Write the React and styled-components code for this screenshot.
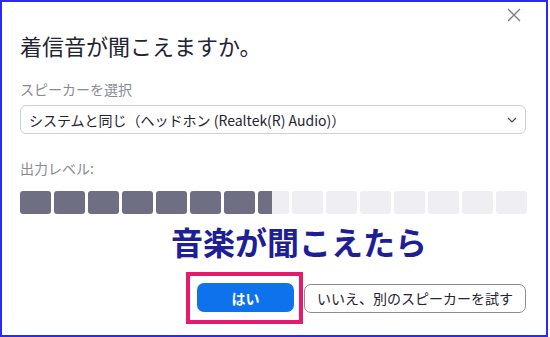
import React from 'react'
import styled, { createGlobalStyle } from 'styled-components'

const GlobalStyle = createGlobalStyle`
  html, body {
    margin: 0;
    padding: 0;
    background: #ffffff;
  }
  body {
    font-family: "Noto Sans CJK JP", "Noto Sans", sans-serif;
  }
`

const Frame = styled.div`
  box-sizing: border-box;
  width: 548px;
  height: 337px;
  border: 2px solid #2b2bf0;
  background: #ffffff;
  position: relative;
  padding: 30px 20px 0 18px;
  display: flex;
  flex-direction: column;
`

const Close = styled.button`
  position: absolute;
  top: 5px;
  right: 24px;
  width: 16px;
  height: 16px;
  padding: 0;
  border: 0;
  background: none;
  display: flex;
  align-items: center;
  justify-content: center;
`

const Title = styled.h1`
  margin: 0;
  font-size: 22px;
  line-height: 26px;
  font-weight: 400;
  color: #232333;
`

const Label = styled.div`
  margin-top: ${p => p.$top}px;
  font-size: 14px;
  line-height: 18px;
  color: #8a8a94;
`

const Select = styled.div`
  box-sizing: border-box;
  margin-top: 7px;
  height: 29px;
  border: 1px solid #cfcfd6;
  border-radius: 6px;
  padding: 0 8px 0 8px;
  display: flex;
  align-items: center;
  justify-content: space-between;
  font-size: 14px;
  color: #232333;
`

const Meter = styled.div`
  margin-top: 14px;
  display: grid;
  grid-template-columns: repeat(15, 31px);
  column-gap: 3px;
`

const Cell = styled.div`
  height: 23px;
  border-radius: 3px;
  background: #eeeef3;
  overflow: hidden;
`

const Fill = styled.div`
  height: 100%;
  background: #6e6f82;
`

const Caption = styled.div`
  margin-top: 8px;
  text-align: center;
  padding-left: 52px;
  font-size: 32px;
  line-height: 38px;
  font-weight: 700;
  color: #1e1e96;
`

const Footer = styled.div`
  margin-top: 12px;
  display: flex;
  justify-content: flex-end;
  align-items: center;
  gap: 1px;
`

const Highlight = styled.div`
  box-sizing: border-box;
  border: 4px solid #e8186c;
  padding: 7px 5px 8px 7px;
`

const Button = styled.button`
  box-sizing: border-box;
  height: 29px;
  border-radius: 7px;
  font-family: inherit;
  font-size: 14px;
  font-weight: ${p => (p.$primary ? 700 : 400)};
  cursor: pointer;
  padding: 0 12px;
  color: ${p => (p.$primary ? '#ffffff' : '#232333')};
  background: ${p => (p.$primary ? '#0e72ed' : '#ffffff')};
  border: ${p => (p.$primary ? '0' : '1.5px solid #8c8c94')};
  width: ${p => (p.$primary ? '97px' : '222px')};
  display: flex;
  align-items: center;
  justify-content: center;
`

const levels = [1, 1, 1, 1, 1, 1, 1, 0.45, 0, 0, 0, 0, 0, 0, 0]

export default function App() {
  return (
    <>
      <GlobalStyle />
      <Frame>
        <Close aria-label="閉じる">
          <svg width="14" height="14" viewBox="0 0 14 14">
            <path d="M1 1 L13 13 M13 1 L1 13" stroke="#7a7a80" strokeWidth="1.3" fill="none" />
          </svg>
        </Close>
        <Title>着信音が聞こえますか。</Title>
        <Label $top={22}>スピーカーを選択</Label>
        <Select>
          <span>システムと同じ（ヘッドホン (Realtek(R) Audio)）</span>
          <svg width="10" height="6" viewBox="0 0 10 6">
            <path d="M1 1 L5 5 L9 1" stroke="#444" strokeWidth="1.2" fill="none" />
          </svg>
        </Select>
        <Label $top={25}>出力レベル:</Label>
        <Meter>
          {levels.map((l, i) => (
            <Cell key={i}>
              <Fill style={{ width: `${l * 100}%` }} />
            </Cell>
          ))}
        </Meter>
        <Caption>音楽が聞こえたら</Caption>
        <Footer>
          <Highlight>
            <Button $primary>はい</Button>
          </Highlight>
          <Button>いいえ、別のスピーカーを試す</Button>
        </Footer>
      </Frame>
    </>
  )
}
